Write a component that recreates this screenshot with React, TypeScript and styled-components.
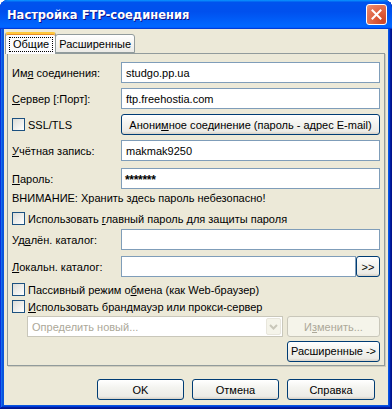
import styled, { createGlobalStyle } from 'styled-components';

const GlobalStyle = createGlobalStyle`
  html, body {
    margin: 0;
    padding: 0;
    background: #ffffff;
  }
  body {
    font-family: 'Liberation Sans', Arial, sans-serif;
    font-size: 11px;
    color: #000000;
  }
  u {
    text-decoration: underline;
    text-underline-offset: 1px;
  }
`;

const Window = styled.div`
  width: 392px;
  height: 409px;
  box-sizing: border-box;
  display: flex;
  flex-direction: column;
  border-radius: 8px 8px 0 0;
  overflow: hidden;
  background: #0855dd;
  box-shadow: inset -1px -1px #00138c, inset 1px 1px #0831d9,
    inset -2px -2px #001ea0, inset 2px 2px #166aee,
    inset -3px -3px #003bda, inset 3px 3px #0855dd;
`;

const TitleBar = styled.div`
  height: 29px;
  flex-shrink: 0;
  display: flex;
  align-items: center;
  justify-content: space-between;
  padding: 0 5px 0 7px;
  background: linear-gradient(
    180deg,
    #0997ff,
    #0053ee 8%,
    #0050ee 40%,
    #0066ff 88%,
    #0066ff 93%,
    #005bff 95%,
    #003dd7 96%,
    #003dd7
  );
`;

const TitleText = styled.span`
  font-family: 'DejaVu Sans', Verdana, sans-serif;
  font-weight: 700;
  font-size: 11.5px;
  color: #ffffff;
  text-shadow: 1px 1px #0f1089;
`;

const CloseButton = styled.div`
  width: 21px;
  height: 21px;
  box-sizing: border-box;
  border: 1px solid #ffffff;
  border-radius: 3px;
  display: flex;
  align-items: center;
  justify-content: center;
  background: radial-gradient(
    circle at 85% 85%,
    #cc4628 0%,
    #dc5a39 35%,
    #e67d5f 80%,
    #f29c80 100%
  );
`;

const Body = styled.div`
  flex: 1;
  margin: 0 4px 4px;
  background: #ece9d8;
  display: flex;
  flex-direction: column;
  padding-top: 2px;
`;

const TabStrip = styled.div`
  display: flex;
  align-items: flex-end;
  height: 22px;
  margin-left: 1px;
  position: relative;
  z-index: 1;
`;

const Tab = styled.div<{ $active?: boolean }>`
  box-sizing: border-box;
  height: ${(p) => (p.$active ? '22px' : '19px')};
  padding: ${(p) => (p.$active ? '3px 2px 0 3px' : '2px 3px 0 3px')};
  border: 1px solid #919b9c;
  border-bottom: ${(p) => (p.$active ? 'none' : '1px solid #919b9c')};
  border-top: ${(p) => (p.$active ? '2px solid #ffc83c' : '1px solid #919b9c')};
  border-radius: 3px 3px 0 0;
  background: ${(p) =>
    p.$active ? '#fcfcfe' : 'linear-gradient(180deg, #ffffff, #ecebe6)'};
  box-shadow: ${(p) => (p.$active ? 'inset 0 1px #e68b2c' : 'none')};
  margin-left: ${(p) => (p.$active ? '0' : '-1px')};
  margin-bottom: ${(p) => (p.$active ? '-1px' : '0')};
  line-height: 14px;
`;

const FocusRect = styled.span`
  display: inline-block;
  padding: 0 3px;
  border: 1px dotted #000000;
  line-height: 13px;
`;

const TabPanel = styled.div`
  margin: 0 3px;
  height: 313px;
  box-sizing: border-box;
  border: 1px solid #919b9c;
  box-shadow: 1px 1px #d0cdbd;
  background: #ece9d8;
  padding: 8px 4px 0 4px;
  display: flex;
  flex-direction: column;
`;

const Row = styled.div<{ $mt: number; $h?: number }>`
  display: flex;
  align-items: center;
  margin-top: ${(p) => p.$mt}px;
  height: ${(p) => p.$h ?? 21}px;
`;

const Label = styled.span`
  width: 109px;
  flex-shrink: 0;
  white-space: nowrap;
`;

const TextBox = styled.div<{ $secret?: boolean }>`
  flex: 1;
  height: 21px;
  box-sizing: border-box;
  border: 1px solid #7f9db9;
  background: #ffffff;
  padding: ${(p) => (p.$secret ? '3px 3px 0' : '0 4px')};
  display: flex;
  align-items: center;
  font-size: ${(p) => (p.$secret ? '12px' : '11px')};
  letter-spacing: ${(p) => (p.$secret ? '-0.3px' : '0')};
  font-weight: ${(p) => (p.$secret ? 700 : 400)};
`;

const Button = styled.div<{ $w?: number; $disabled?: boolean }>`
  box-sizing: border-box;
  height: 21px;
  width: ${(p) => (p.$w ? `${p.$w}px` : 'auto')};
  flex: ${(p) => (p.$w ? 'none' : '1')};
  display: flex;
  align-items: center;
  justify-content: center;
  white-space: nowrap;
  border: 1px solid ${(p) => (p.$disabled ? '#c9c7ba' : '#003c74')};
  border-radius: 3px;
  color: ${(p) => (p.$disabled ? '#aca899' : '#000000')};
  background: ${(p) =>
    p.$disabled
      ? '#f5f4ea'
      : 'linear-gradient(180deg, #ffffff, #f4f4f0 40%, #ecebe6 86%, #d6d0c5)'};
`;

const CheckRow = styled.label`
  display: flex;
  align-items: center;
  gap: 3px;
  white-space: nowrap;
`;

const CheckBox = styled.span`
  width: 13px;
  height: 13px;
  box-sizing: border-box;
  flex-shrink: 0;
  border: 1px solid #1c5180;
  background: linear-gradient(135deg, #dcdcd7, #ffffff);
`;

const SslCell = styled.div`
  width: 109px;
  flex-shrink: 0;
`;

const Warning = styled.div`
  margin-top: 3px;
  height: 13px;
  line-height: 13px;
  white-space: nowrap;
`;

const Combo = styled.div`
  margin-left: 15px;
  width: 256px;
  height: 21px;
  box-sizing: border-box;
  border: 1px solid #c9c7ba;
  background: #ffffff;
  display: flex;
  align-items: center;
  justify-content: space-between;
  padding: 0 1px 0 4px;
  color: #aca899;
`;

const ComboArrow = styled.span`
  width: 15px;
  height: 17px;
  box-sizing: border-box;
  border: 1px solid #e8e6dc;
  border-radius: 2px;
  background: #f5f4ea;
  display: flex;
  align-items: center;
  justify-content: center;
`;

const Spacer = styled.div`
  flex: 1;
`;

const Footer = styled.div`
  display: flex;
  justify-content: flex-end;
  gap: 8px;
  margin-top: 13px;
  padding-right: 13px;
`;

const App = () => {
  return (
    <>
      <GlobalStyle />
      <Window>
        <TitleBar>
          <TitleText>Настройка FTP-соединения</TitleText>
          <CloseButton>
            <svg width="11" height="11" viewBox="0 0 11 11">
              <path
                d="M1.5 1.5 L9.5 9.5 M9.5 1.5 L1.5 9.5"
                stroke="#ffffff"
                strokeWidth="2"
                strokeLinecap="square"
              />
            </svg>
          </CloseButton>
        </TitleBar>
        <Body>
          <TabStrip>
            <Tab $active>
              <FocusRect>Общие</FocusRect>
            </Tab>
            <Tab>Расширенные</Tab>
          </TabStrip>
          <TabPanel>
            <Row $mt={0}>
              <Label>
                Им<u>я</u> соединения:
              </Label>
              <TextBox>studgo.pp.ua</TextBox>
            </Row>
            <Row $mt={5}>
              <Label>
                <u>С</u>ервер [:Порт]:
              </Label>
              <TextBox>ftp.freehostia.com</TextBox>
            </Row>
            <Row $mt={5}>
              <SslCell>
                <CheckRow>
                  <CheckBox />
                  <span>SSL/TLS</span>
                </CheckRow>
              </SslCell>
              <Button>
                <span>
                  Анони<u>м</u>ное соединение (пароль - адрес E-mail)
                </span>
              </Button>
            </Row>
            <Row $mt={5}>
              <Label>
                <u>У</u>чётная запись:
              </Label>
              <TextBox>makmak9250</TextBox>
            </Row>
            <Row $mt={7}>
              <Label>
                <u>П</u>ароль:
              </Label>
              <TextBox $secret>*******</TextBox>
            </Row>
            <Warning>ВНИМАНИЕ: Хранить здесь пароль небезопасно!</Warning>
            <Row $mt={7} $h={13}>
              <CheckRow>
                <CheckBox />
                <span>
                  Использовать <u>г</u>лавный пароль для защиты пароля
                </span>
              </CheckRow>
            </Row>
            <Row $mt={4}>
              <Label>
                Уд<u>а</u>лён. каталог:
              </Label>
              <TextBox />
            </Row>
            <Row $mt={6}>
              <Label>
                <u>Л</u>окальн. каталог:
              </Label>
              <TextBox />
              <Button $w={24}>&gt;&gt;</Button>
            </Row>
            <Row $mt={6} $h={13}>
              <CheckRow>
                <CheckBox />
                <span>
                  Пассивный режим о<u>б</u>мена (как Web-браузер)
                </span>
              </CheckRow>
            </Row>
            <Row $mt={4} $h={13}>
              <CheckRow>
                <CheckBox />
                <span>
                  <u>И</u>спользовать брандмауэр или прокси-сервер
                </span>
              </CheckRow>
            </Row>
            <Row $mt={3}>
              <Combo>
                <span>Определить новый...</span>
                <ComboArrow>
                  <svg width="9" height="6" viewBox="0 0 9 6">
                    <path
                      d="M1 1 L4.5 4.5 L8 1"
                      stroke="#c9c7ba"
                      strokeWidth="2"
                      fill="none"
                    />
                  </svg>
                </ComboArrow>
              </Combo>
              <Spacer />
              <Button $w={93} $disabled>
                <span>
                  И<u>з</u>менить...
                </span>
              </Button>
            </Row>
            <Row $mt={3} $h={22}>
              <Spacer />
              <Button $w={93}>Расширенные -&gt;</Button>
            </Row>
          </TabPanel>
          <Footer>
            <Button $w={87}>OK</Button>
            <Button $w={87}>Отмена</Button>
            <Button $w={88}>Справка</Button>
          </Footer>
        </Body>
      </Window>
    </>
  );
};

export default App;
